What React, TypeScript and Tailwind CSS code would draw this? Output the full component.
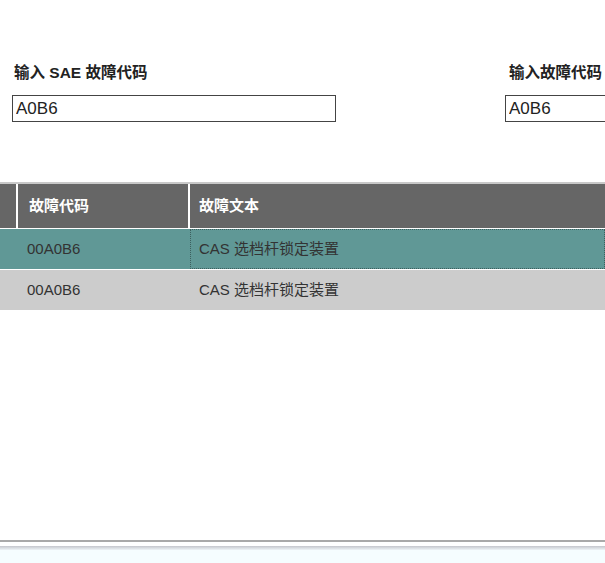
import React from "react";

const font = { fontFamily: '"Liberation Sans", Arial, "Noto Sans CJK SC", sans-serif' };

export default function App() {
  return (
    <div className="w-[605px] h-[563px] overflow-hidden bg-white flex flex-col" style={font}>
      {/* search fields */}
      <div className="flex pt-[63px] h-[182px]">
        <div className="ml-[12px] w-[324px] flex flex-col">
          <label className="pl-[2px] text-[15.5px] leading-[20px] font-bold text-[#222]">输入 SAE 故障代码</label>
          <input
            readOnly
            value="A0B6"
            className="mt-[12px] h-[27px] w-[324px] border border-[#444] px-[3px] text-[17px] text-[#222] outline-none"
            style={font}
          />
        </div>
        <div className="ml-[169px] flex flex-col">
          <label className="pl-[4px] text-[15.5px] leading-[20px] font-bold text-[#222] whitespace-nowrap">输入故障代码</label>
          <input
            readOnly
            value="A0B6"
            className="mt-[12px] h-[27px] w-[140px] border border-[#444] px-[3px] text-[17px] text-[#222] outline-none"
            style={font}
          />
        </div>
      </div>

      {/* result table */}
      <div className="border-t-2 border-[#c8c8c8]">
        <div className="flex h-[44px] bg-[#666666] text-white text-[15px] font-bold">
          <div className="w-[18px] border-r-2 border-white" />
          <div className="w-[172px] border-r-2 border-white flex items-center pl-[11px]">故障代码</div>
          <div className="flex-1 flex items-center pl-[9px]">故障文本</div>
        </div>
        <div className="h-[1px] bg-white" />
        <div className="flex h-[40px] bg-[#609896] text-[15px] text-[#333]">
          <div className="w-[18px]" />
          <div className="w-[172px] flex items-center pl-[9px]">00A0B6</div>
          <div className="flex-1 flex items-center pl-[8px] border border-dotted border-[#3c5f5e]">CAS 选档杆锁定装置</div>
        </div>
        <div className="h-[1px] bg-white" />
        <div className="flex h-[40px] bg-[#cccccc] text-[15px] text-[#333]">
          <div className="w-[18px]" />
          <div className="w-[172px] flex items-center pl-[9px]">00A0B6</div>
          <div className="flex-1 flex items-center pl-[9px]">CAS 选档杆锁定装置</div>
        </div>
      </div>

      <div className="flex-1 min-h-0 flex flex-col">
        <div className="h-[230px] shrink-0" />
        <div className="h-[2px] shrink-0 bg-[#a9a9a9]" />
        <div className="h-[4px] shrink-0 bg-white" />
        <div className="h-[4px] shrink-0 bg-gradient-to-b from-[#c4c6cc] to-[#eef4f7]" />
        <div className="flex-1 bg-[#f5fdff]" />
      </div>
    </div>
  );
}
